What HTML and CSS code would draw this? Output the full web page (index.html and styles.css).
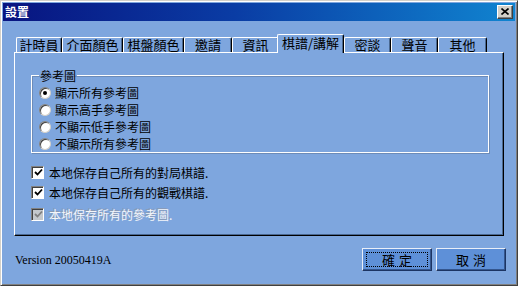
FILE: index.html
```html
<!DOCTYPE html>
<html lang="zh-Hant">
<head>
  <meta charset="UTF-8">
  <title>設置</title>
  <link rel="stylesheet" href="styles.css">
</head>
<body>
  <div class="window">
    <div class="titlebar">
      <span class="title">設置</span>
      <span class="close">
        <svg width="8" height="7" viewBox="0 0 8 7"><path d="M0.5 0.5 L7.5 6.5 M7.5 0.5 L0.5 6.5" stroke="#000" stroke-width="1.6"/></svg>
      </span>
    </div>
    <div class="tabs">
      <div class="tab t1">計時員</div>
      <div class="tab t2">介面顏色</div>
      <div class="tab t3">棋盤顏色</div>
      <div class="tab t4">邀請</div>
      <div class="tab t5">資訊</div>
      <div class="tab t6 active">棋譜/講解</div>
      <div class="tab t7">密談</div>
      <div class="tab t8">聲音</div>
      <div class="tab t9">其他</div>
    </div>
    <div class="panel">
      <fieldset class="group">
        <legend>參考圖</legend>
        <div class="option"><span class="radio checked"></span>顯示所有參考圖</div>
        <div class="option"><span class="radio"></span>顯示高手參考圖</div>
        <div class="option"><span class="radio"></span>不顯示低手參考圖</div>
        <div class="option"><span class="radio"></span>不顯示所有參考圖</div>
      </fieldset>
      <div class="checks">
        <div class="check-row"><span class="checkbox"><svg width="9" height="9" viewBox="0 0 9 9"><path d="M1 4 L3.5 6.5 L8 1.5" fill="none" stroke="#000" stroke-width="1.8"/></svg></span>本地保存自己所有的對局棋譜.</div>
        <div class="check-row"><span class="checkbox"><svg width="9" height="9" viewBox="0 0 9 9"><path d="M1 4 L3.5 6.5 L8 1.5" fill="none" stroke="#000" stroke-width="1.8"/></svg></span>本地保存自己所有的觀戰棋譜.</div>
        <div class="check-row disabled"><span class="checkbox"><svg width="9" height="9" viewBox="0 0 9 9"><path d="M1 4 L3.5 6.5 L8 1.5" fill="none" stroke="#808080" stroke-width="1.8"/></svg></span>本地保存所有的參考圖.</div>
      </div>
    </div>
    <div class="footer">
      <span class="version">Version 20050419A</span>
      <div class="buttons">
        <div class="button default"><span class="focus">確定</span></div>
        <div class="button">取消</div>
      </div>
    </div>
  </div>
</body>
</html>
```

FILE: styles.css
```css
body { margin: 0; background: #fff; }
.window {
  width: 518px;
  height: 286px;
  box-sizing: border-box;
  background: #7ea6de;
  border: 1px solid;
  border-color: #d4d0c8 #404040 #404040 #d4d0c8;
  box-shadow: inset 1px 1px #fff, inset -1px -1px #808080;
  padding: 2px;
  display: flex;
  flex-direction: column;
  font-family: "Noto Sans CJK TC", sans-serif;
  font-size: 12px;
  color: #000;
}
.titlebar {
  height: 18px;
  background: linear-gradient(to right, #081480, #0a3ca4 45%, #1084d0);
  display: flex;
  align-items: center;
  justify-content: space-between;
  padding: 0 2px;
}
.title { color: #fff; font-weight: bold; font-size: 12px; line-height: 14px; }
.close {
  width: 16px;
  height: 14px;
  box-sizing: border-box;
  background: #d4d0c8;
  border: 1px solid;
  border-color: #fff #404040 #404040 #fff;
  box-shadow: inset -1px -1px #808080;
  display: flex;
  align-items: center;
  justify-content: center;
}
.close svg { display: block; margin: 0 1px 1px 0; }

.tabs {
  display: flex;
  align-items: flex-end;
  height: 18px;
  margin: 13px 0 0 13px;
  position: relative;
  z-index: 1;
}
.tab {
  height: 15px;
  box-sizing: border-box;
  border-top: 1px solid #fff;
  border-left: 1px solid #fff;
  border-right: 1px solid #000;
  border-radius: 2px 2px 0 0;
  box-shadow: inset -1px 0 #4a6890;
  text-align: center;
  font-size: 13px;
  line-height: 14px;
  background: #7ea6de;
}
.t1 { width: 46px; }
.t2 { width: 61px; }
.t3 { width: 61px; }
.t4 { width: 48px; }
.t5 { width: 47px; }
.t6 { width: 67px; }
.t7 { width: 47px; }
.t8 { width: 47px; }
.t9 { width: 49px; }
.tab.active {
  height: 19px;
  margin: 0 0 -1px -2px;
  line-height: 16px;
}

.panel {
  width: 490px;
  height: 184px;
  box-sizing: border-box;
  margin-left: 11px;
  border: 1px solid;
  border-color: #fff #000 #000 #fff;
  box-shadow: inset -1px -1px #4a6890;
  padding: 0 14px 0 16px;
}
.group {
  margin: 16px 0 0;
  padding: 2px 6px 4px 7px;
  border: 1px solid #fff;
  box-shadow: inset 1px 1px #6d8cb8, 1px 1px #6d8cb8;
  height: 84px;
  box-sizing: border-box;
}
.group legend {
  padding: 0 1px;
  line-height: 13px;
}
.option {
  display: flex;
  align-items: center;
  gap: 4px;
  height: 17px;
}
.radio {
  width: 12px;
  height: 12px;
  box-sizing: border-box;
  border-radius: 50%;
  background: #fff;
  border: 1px solid;
  border-color: #808080 #d4d0c8 #d4d0c8 #808080;
  box-shadow: inset 1px 1px #404040;
  display: flex;
  align-items: center;
  justify-content: center;
}
.radio.checked::after {
  content: "";
  width: 4px;
  height: 4px;
  border-radius: 50%;
  background: #000;
}

.checks { margin-top: 9px; }
.check-row {
  display: flex;
  align-items: center;
  gap: 5px;
  height: 20px;
}
.check-row.disabled { height: 22px; padding-top: 2px; box-sizing: border-box; color: #f4f6fa; text-shadow: -1px -1px 0 #8a9ab4; }
.checkbox {
  width: 13px;
  height: 13px;
  box-sizing: border-box;
  background: #fff;
  border: 1px solid;
  border-color: #808080 #fff #fff #808080;
  box-shadow: inset 1px 1px #404040;
  display: flex;
  align-items: center;
  justify-content: center;
}
.checkbox svg { display: block; margin: 1px 0 0 1px; }
.disabled .checkbox { background: #c4c8cc; }

.footer {
  flex: 1;
  display: flex;
  align-items: center;
  justify-content: space-between;
  padding: 0 9px 0 12px;
}
.version { font-family: "Liberation Serif", serif; font-size: 12px; margin-top: 1px; }
.buttons { display: flex; gap: 4px; }
.button {
  width: 70px;
  height: 23px;
  box-sizing: border-box;
  background: #5e90d8;
  border: 1px solid;
  border-color: #e8eef8 #1c3462 #1c3462 #e8eef8;
  box-shadow: inset -1px -1px #34568e;
  display: flex;
  align-items: center;
  justify-content: center;
  letter-spacing: 4px;
  font-size: 13px;
  padding-left: 4px;
}
.button.default { padding: 3px; }
.focus {
  flex: 1;
  align-self: stretch;
  border: 1px dotted #000;
  display: flex;
  align-items: center;
  justify-content: center;
  padding-left: 4px;
}
```
